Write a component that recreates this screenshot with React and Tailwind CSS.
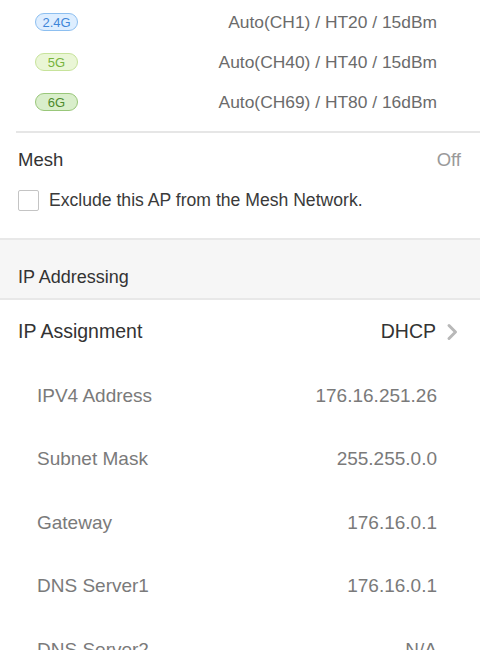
import React from "react";

const font = { fontFamily: '"Liberation Sans", Arial, sans-serif' };

function Badge({ label, cls }) {
  return (
    <span
      className={`inline-flex h-[18px] w-[43px] items-center justify-center rounded-full border text-[13px] leading-none ${cls}`}
    >
      {label}
    </span>
  );
}

const radios = [
  { label: "2.4G", cls: "border-[#8dbff0] bg-[#deeeff] text-[#3f86d8]", value: "Auto(CH1) / HT20 / 15dBm" },
  { label: "5G", cls: "border-[#c7e39b] bg-[#eaf6d6] text-[#76b33c]", value: "Auto(CH40) / HT40 / 15dBm" },
  { label: "6G", cls: "border-[#99c77a] bg-[#d9eecb] text-[#4d8a2c]", value: "Auto(CH69) / HT80 / 16dBm" },
];

const ipRows = [
  ["IPV4 Address", "176.16.251.26"],
  ["Subnet Mask", "255.255.0.0"],
  ["Gateway", "176.16.0.1"],
  ["DNS Server1", "176.16.0.1"],
  ["DNS Server2", "N/A"],
];

export default function App() {
  return (
    <div className="h-[650px] w-[480px] overflow-hidden bg-white" style={font}>
      <div className="pt-[2px]">
        {radios.map((r) => (
          <div key={r.label} className="flex h-[40px] items-center justify-between pl-[35px] pr-[43px]">
            <Badge label={r.label} cls={r.cls} />
            <span className="text-[17.4px] text-[#6b6b6b]">{r.value}</span>
          </div>
        ))}
      </div>
      <div className="ml-[16px] mt-[9px] h-[2px] bg-[#e6e6e6]" />
      <div className="flex h-[54px] items-center justify-between pl-[18px] pr-[19px]">
        <span className="text-[18.5px] text-[#333]">Mesh</span>
        <span className="text-[18.5px] text-[#9a9a9a]">Off</span>
      </div>
      <div className="flex h-[26px] items-center gap-[10px] pl-[18px]">
        <span className="block h-[21px] w-[21px] rounded-[2px] border border-[#c4c4c4] bg-white" />
        <span className="text-[17.6px] text-[#3a3a3a]">Exclude this AP from the Mesh Network.</span>
      </div>
      <div className="mt-[25px] flex h-[62px] items-center border-y-2 border-[#e8e8e8] bg-[#f6f6f6] pl-[18px] pt-[16px]">
        <span className="text-[18px] text-[#333]">IP Addressing</span>
      </div>
      <div className="flex h-[64px] items-center justify-between pl-[18px] pr-[22px]">
        <span className="text-[19.5px] text-[#333]">IP Assignment</span>
        <span className="flex items-center gap-[10px]">
          <span className="text-[19.5px] text-[#333]">DHCP</span>
          <svg width="12" height="18" viewBox="0 0 12 18" fill="none">
            <path d="M3 2.5 L9.5 9 L3 15.5" stroke="#b8b8b8" strokeWidth="3" strokeLinecap="round" strokeLinejoin="round" />
          </svg>
        </span>
      </div>
      {ipRows.map(([k, v]) => (
        <div key={k} className="flex h-[63.5px] items-center justify-between pl-[37px] pr-[43px]">
          <span className="text-[19px] text-[#7a7a7a]">{k}</span>
          <span className="text-[19px] text-[#7a7a7a]">{v}</span>
        </div>
      ))}
    </div>
  );
}
